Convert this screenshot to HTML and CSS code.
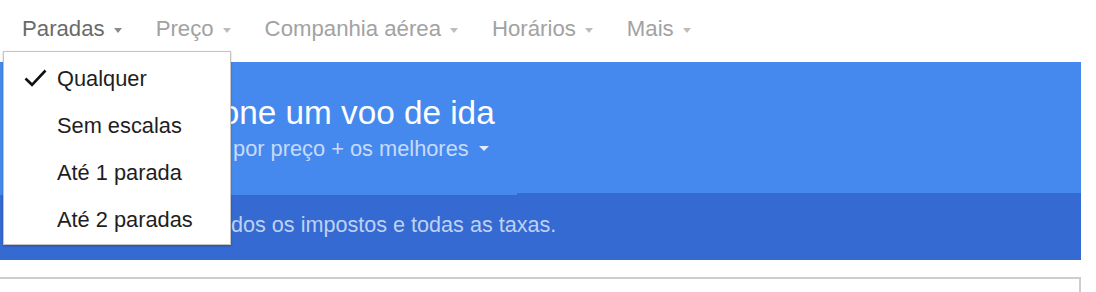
FILE: index.html
```html
<!DOCTYPE html>
<html lang="pt-BR">
<head>
    <meta charset="UTF-8">
    <meta name="viewport" content="width=device-width, initial-scale=1.0">
    <link rel="stylesheet" href="styles.css">
</head>
<body>
    <div class="filters">
        <div class="filter active">Paradas <span class="caret"></span></div>
        <div class="filter">Preço <span class="caret"></span></div>
        <div class="filter">Companhia aérea <span class="caret"></span></div>
        <div class="filter">Horários <span class="caret"></span></div>
        <div class="filter">Mais <span class="caret"></span></div>
    </div>

    <div class="results">
        <div class="results-head">
            <h1>Selecione um voo de ida</h1>
            <div class="sort">Ordenado por preço + os melhores <span class="caret"></span></div>
        </div>
        <div class="results-note">Já inclui todos os impostos e todas as taxas.</div>
        <div class="card"></div>
    </div>

    <div class="menu">
        <div class="menu-item selected">
            <span class="check">
                <svg width="23" height="18" viewBox="0 0 23 18"><path d="M1.5 9.5 L8 15.8 L21.5 1.5" fill="none" stroke="#111" stroke-width="2.6"/></svg>
            </span>
            Qualquer
        </div>
        <div class="menu-item"><span class="check"></span>Sem escalas</div>
        <div class="menu-item"><span class="check"></span>Até 1 parada</div>
        <div class="menu-item"><span class="check"></span>Até 2 paradas</div>
    </div>
</body>
</html>
```

FILE: styles.css
```css
body {
    margin: 0;
    font-family: "Liberation Sans", Arial, sans-serif;
    background-color: #fff;
    position: relative;
}

.filters {
    display: flex;
    height: 62px;
    box-sizing: border-box;
    padding: 17px 0 0 22px;
}

.filter {
    display: flex;
    align-items: center;
    height: 24px;
    font-size: 22.2px;
    line-height: 24px;
    color: #a2a2a2;
    margin-right: 34px;
    white-space: nowrap;
}

.filter .caret {
    margin-left: 9px;
    margin-top: 2px;
    border-left: 4.5px solid transparent;
    border-right: 4.5px solid transparent;
    border-top: 5px solid #bdbdbd;
}

.filter.active {
    color: #6b6b6b;
}

.filter.active .caret {
    border-top-color: #8a8a8a;
}

.results {
    width: 1081px;
}

.results-head {
    position: relative;
    background-color: #4689ee;
    height: 131px;
    box-sizing: border-box;
    padding: 31px 0 0 130px;
}

.results-head::after {
    content: "";
    position: absolute;
    left: 0;
    bottom: -2px;
    width: 517px;
    height: 2px;
    background-color: #4689ee;
}

h1 {
    margin: 0;
    font-size: 33.3px;
    line-height: 40px;
    font-weight: normal;
    color: #fff;
    white-space: nowrap;
}

.sort {
    margin-top: 3px;
    font-size: 21.8px;
    line-height: 26px;
    color: #c8dafa;
    white-space: nowrap;
}

.sort .caret {
    display: inline-block;
    margin-left: 4px;
    vertical-align: 5px;
    border-left: 5px solid transparent;
    border-right: 5px solid transparent;
    border-top: 5px solid #e4edfd;
}

.results-note {
    background-color: #356ad2;
    height: 67px;
    box-sizing: border-box;
    padding: 19px 0 0 129px;
    font-size: 21.6px;
    line-height: 26px;
    color: #bfd1f2;
    white-space: nowrap;
}

.card {
    margin-top: 17px;
    height: 40px;
    border: 2px solid #cdcdcd;
    border-left: none;
}

.menu {
    position: absolute;
    left: 3px;
    top: 51px;
    width: 228px;
    height: 194px;
    box-sizing: border-box;
    padding-top: 3px;
    background-color: #fff;
    border: 1px solid #c4c4c4;
    box-shadow: 0 1px 2px rgba(0, 0, 0, 0.25);
}

.menu-item {
    display: flex;
    align-items: center;
    height: 47px;
    padding-left: 20px;
    font-size: 21.8px;
    color: #1e1e1e;
    white-space: nowrap;
}

.check {
    display: flex;
    width: 33px;
    flex-shrink: 0;
    margin-bottom: 2px;
}
```
